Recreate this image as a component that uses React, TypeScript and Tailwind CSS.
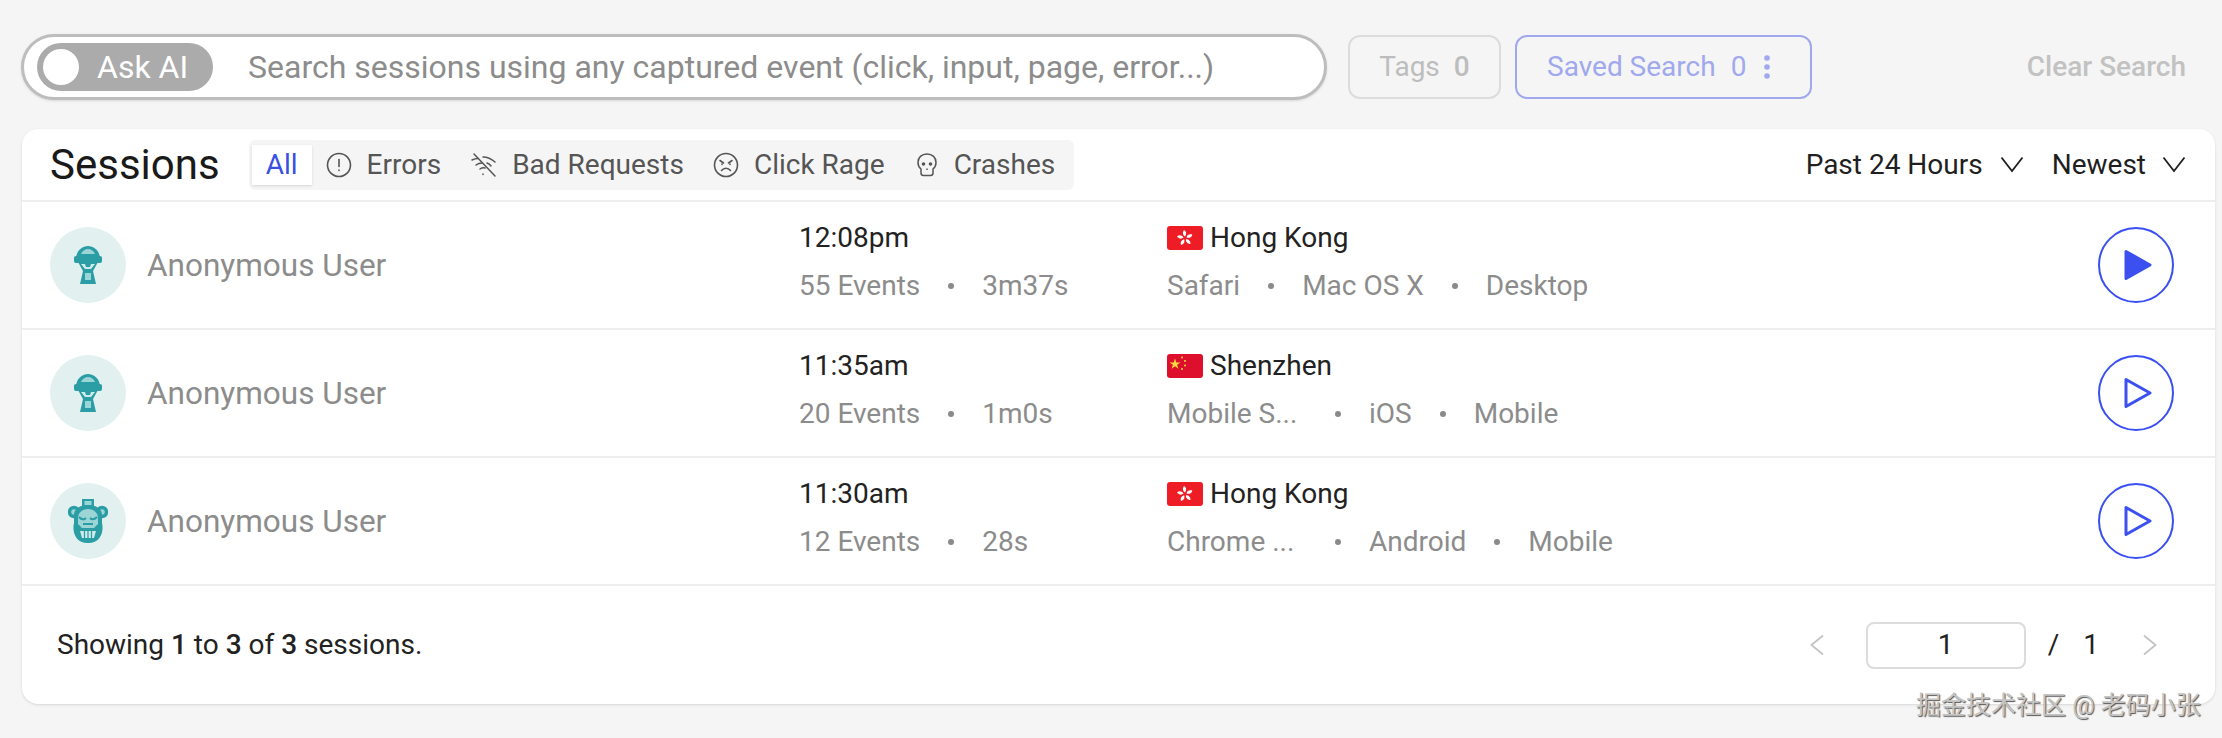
import React from 'react';

const FONT = { fontFamily: 'Roboto, "Noto Sans CJK SC", sans-serif' };

function AlertIcon() {
  return (
    <svg width="26" height="26" viewBox="0 0 26 26" fill="none" stroke="#555" strokeWidth="1.6" strokeLinecap="round">
      <circle cx="13" cy="13" r="11.5" />
      <path d="M13 7.5v7" />
      <path d="M13 18v.4" />
    </svg>
  );
}

function NoWifiIcon() {
  return (
    <svg width="28" height="28" viewBox="0 0 28 28" fill="none" stroke="#555" strokeWidth="1.5" strokeLinecap="round">
      <path d="M4 3l21 22" />
      <path d="M2 9c2-1 4-1.500 6-1.500" />
      <path d="M13 6c4 0 8 1.500 12 5" />
      <path d="M6 14c2-1.500 4-2 6-2" />
      <path d="M17 12c1.500 .5 3 1.500 4 3" />
      <path d="M10 18c1.500-1 3-1.500 5-1" />
      <path d="M13 23v.4" />
    </svg>
  );
}

function AngryIcon() {
  return (
    <svg width="26" height="26" viewBox="0 0 26 26" fill="none" stroke="#555" strokeWidth="1.6" strokeLinecap="round">
      <circle cx="13" cy="13" r="11.500" />
      <path d="M7 8.500l3.500 2.500" />
      <path d="M19 8.500l-3.500 2.500" />
      <path d="M8.500 18.500c2.500-3 6.500-3 9 0" />
      <path d="M9 12v.4M17 12v.4" />
    </svg>
  );
}

function SkullIcon() {
  return (
    <svg width="22" height="28" viewBox="0 0 22 28" fill="none" stroke="#555" strokeWidth="1.500">
      <path d="M11 3c5.500 0 9 3.500 9 8.500 0 3-1 5-3 6.500v4c0 1.500-1 2.500-2.500 2.500h-7c-1.500 0-2.500-1-2.500-2.500v-4c-2-1.500-3-3.500-3-6.500C2 6.500 5.500 3 11 3z" />
      <circle cx="7.500" cy="13" r="1.800" fill="#555" stroke="none" />
      <circle cx="14.500" cy="13" r="1.800" fill="#555" stroke="none" />
      <path d="M11 17.500v1.500" />
    </svg>
  );
}

function Chevron({ className }: { className?: string }) {
  return (
    <svg width="24" height="17" viewBox="0 0 24 17" fill="none" stroke="#1f1f1f" strokeWidth="1.8" className={className}>
      <path d="M1.500 1.500L12 15 22.500 1.500" />
    </svg>
  );
}

function PageArrow({ dir, className }: { dir: 'left' | 'right'; className?: string }) {
  return (
    <svg width="14" height="22" viewBox="0 0 14 22" fill="none" stroke="#c4c4c4" strokeWidth="1.800" className={className}>
      <path d={dir === 'left' ? 'M13 1.500L1.500 11 13 20.500' : 'M1 1.500L12.500 11 1 20.500'} />
    </svg>
  );
}

function HelmetAvatar() {
  return (
    <svg width="28" height="38" viewBox="0 0 28 38">
      <path d="M2 13C2 5 8 0 14 0s12 5 12 13z" fill="#2a9da5" />
      <path d="M7 8c1-3 4-5 7-5s6 2 7 5z" fill="#9bd5d6" />
      <rect x="0" y="10" width="28" height="7" rx="2" fill="#2a9da5" />
      <path d="M4 16h20l-5 9 3 13H6l3-13z" fill="#2a9da5" />
      <path d="M7 18h4l1 3h4l1-3h4l-4 5H11z" fill="#cfeaea" />
      <rect x="11" y="27" width="6" height="7" fill="#9bd5d6" />
    </svg>
  );
}

function BearAvatar() {
  return (
    <svg width="40" height="44" viewBox="0 0 40 44">
      <rect x="14" y="0" width="12" height="8" fill="#2a9da5" />
      <rect x="16.500" y="2" width="7" height="4" fill="#9bd5d6" />
      <circle cx="6" cy="13" r="4.500" fill="#9bd5d6" stroke="#2a9da5" strokeWidth="3.500" />
      <circle cx="34" cy="13" r="4.500" fill="#9bd5d6" stroke="#2a9da5" strokeWidth="3.500" />
      <path d="M6 16c0-6 6-10 14-10s14 4 14 10v8c2 8-1 20-14 20S4 32 6 24z" fill="#2a9da5" />
      <path d="M10 19c0-5 4-9 10-9s10 4 10 9v6l-4 4H14l-4-4z" fill="#9bd5d6" />
      <path d="M11 18c3 3 5 3 7 1M29 18c-3 3-5 3-7 1" stroke="#2a9da5" strokeWidth="2" fill="none" />
      <rect x="15" y="24" width="10" height="2" fill="#2a9da5" />
      <path d="M12 32h16l-2 7H14z" fill="#cfeaea" />
      <path d="M16.500 32v7M20 32v7M23.500 32v7" stroke="#2a9da5" strokeWidth="1.200" />
    </svg>
  );
}

function HKFlag() {
  return (
    <svg width="36" height="24" viewBox="0 0 36 24" className="shrink-0">
      <rect width="36" height="24" rx="3" fill="#ee1c25" />
      {[0, 72, 144, 216, 288].map((a) => (
        <path key={a} d="M18 10.500c-2.300-1.500-2.800-3.800-1.100-6.500 2.400 1.200 3 3.800 1.100 6.500z" fill="#fff" transform={`rotate(${a} 18 12)`} />
      ))}
    </svg>
  );
}

function CNFlag() {
  return (
    <svg width="36" height="24" viewBox="0 0 36 24" className="shrink-0">
      <rect width="36" height="24" rx="3" fill="#de0f2d" />
      <path d="M8 4.500l1.300 3.900h4.100l-3.300 2.400 1.300 3.900L8 12.300l-3.400 2.400 1.300-3.900-3.300-2.400h4.100z" fill="#ffd83d" />
      <circle cx="15" cy="3.500" r="1" fill="#ffd83d" />
      <circle cx="18" cy="7" r="1" fill="#ffd83d" />
      <circle cx="18" cy="11.500" r="1" fill="#ffd83d" />
      <circle cx="15" cy="15" r="1" fill="#ffd83d" />
    </svg>
  );
}

function PlayButton({ filled }: { filled?: boolean }) {
  return (
    <button type="button" className="w-[76px] h-[76px] rounded-full border-2 border-[#3b50ee] flex items-center justify-center">
      <svg width="28" height="32" viewBox="0 0 28 32" className="ml-[3px]" fill={filled ? '#3b50ee' : 'none'} stroke="#3b50ee" strokeWidth="3" strokeLinejoin="round">
        <path d="M2 2.500L26 16 2 29.500z" />
      </svg>
    </button>
  );
}

function Dot() {
  return <span className="w-[6px] h-[6px] rounded-full bg-[#8a8a8a] shrink-0" />;
}

type Session = {
  avatar: React.ReactNode;
  time: string;
  events: string;
  duration: string;
  flag: React.ReactNode;
  city: string;
  browser: string;
  os: string;
  device: string;
  playing?: boolean;
};

const SESSIONS: Session[] = [
  { avatar: <HelmetAvatar />, time: '12:08pm', events: '55 Events', duration: '3m37s', flag: <HKFlag />, city: 'Hong Kong', browser: 'Safari', os: 'Mac OS X', device: 'Desktop', playing: true },
  { avatar: <HelmetAvatar />, time: '11:35am', events: '20 Events', duration: '1m0s', flag: <CNFlag />, city: 'Shenzhen', browser: 'Mobile S...', os: 'iOS', device: 'Mobile' },
  { avatar: <BearAvatar />, time: '11:30am', events: '12 Events', duration: '28s', flag: <HKFlag />, city: 'Hong Kong', browser: 'Chrome ...', os: 'Android', device: 'Mobile' },
];

function SessionRow({ s }: { s: Session }) {
  return (
    <div className="h-[128px] flex items-center pl-[28px] pr-[41px] border-b-2 border-[#eeeeee]">
      <div className="w-[749px] flex items-center gap-[21px] shrink-0">
        <div className="w-[76px] h-[76px] rounded-full bg-[#e2f1f0] flex items-center justify-center">{s.avatar}</div>
        <span className="text-[31.5px] mt-[1px] text-[#8c8c8c]">Anonymous User</span>
      </div>
      <div className="w-[368px] shrink-0 mb-[6px]">
        <div className="text-[28px] leading-[36px] text-[#222]">{s.time}</div>
        <div className="mt-[12px] flex items-center gap-[28px] text-[28px] leading-[36px] text-[#8c8c8c]">
          <span>{s.events}</span>
          <Dot />
          <span>{s.duration}</span>
        </div>
      </div>
      <div className="flex-1 mb-[6px]">
        <div className="flex items-center gap-[7px] text-[28px] leading-[36px] text-[#222]">
          {s.flag}
          <span>{s.city}</span>
        </div>
        <div className="mt-[12px] flex items-center gap-[28px] text-[28px] leading-[36px] text-[#8c8c8c]">
          <span className={s.browser.endsWith('...') ? 'w-[140px]' : ''}>{s.browser}</span>
          <Dot />
          <span>{s.os}</span>
          <Dot />
          <span>{s.device}</span>
        </div>
      </div>
      <PlayButton filled={s.playing} />
    </div>
  );
}

export default function App() {
  return (
    <div className="relative w-[2222px] h-[738px] bg-[#f5f5f5] overflow-hidden" style={FONT}>
      <div className="flex items-center pt-[34px] pl-[21px] pr-[36px]">
        <div className="w-[1306px] h-[66px] rounded-full bg-white border-[3px] border-[#bdbdbd] shadow-sm flex items-center pl-[13px]">
          <div className="w-[176px] h-[48px] rounded-full bg-[#ababab] flex items-center pl-[6px] gap-[18px]">
            <span className="w-[36px] h-[36px] rounded-full bg-white" />
            <span className="text-[32px] text-white">Ask AI</span>
          </div>
          <span className="ml-[35px] text-[32px] text-[#8c8c8c]">Search sessions using any captured event (click, input, page, error...)</span>
        </div>
        <div className="ml-[21px] w-[153px] h-[64px] rounded-[12px] border-2 border-[#dcdcdc] flex items-center justify-center gap-[14px] text-[28px] text-[#bdbdbd]">
          <span>Tags</span>
          <span className="font-medium">0</span>
        </div>
        <div className="ml-[14px] w-[297px] h-[64px] rounded-[12px] border-2 border-[#a0a8ee] flex items-center pl-[30px] gap-[15px] text-[28px] text-[#a0a8ee]">
          <span>Saved Search</span>
          <span>0</span>
          <svg width="8" height="26" viewBox="0 0 8 26" fill="#a0a8ee" className="ml-[2px]">
            <circle cx="4" cy="4" r="2.800" />
            <circle cx="4" cy="13" r="2.800" />
            <circle cx="4" cy="22" r="2.800" />
          </svg>
        </div>
        <span className="ml-auto text-[28px] font-medium text-[#c2c2c2]">Clear Search</span>
      </div>

      <div className="mt-[29px] ml-[22px] w-[2193px] h-[575px] bg-white rounded-[16px] shadow-sm flex flex-col">
        <div className="h-[73px] flex items-center pl-[28px] pr-[29px] border-b-2 border-[#eeeeee]">
          <span className="text-[42px] text-[#1a1a1a]">Sessions</span>
          <div className="ml-[29px] h-[50px] rounded-[6px] bg-[#f5f5f5] flex items-center text-[28px] text-[#555]">
            <span className="h-[40px] w-[60px] ml-[3px] bg-white shadow-sm flex items-center justify-center text-[#3a50e0]">All</span>
            <span className="flex items-center gap-[15px] ml-[14px]"><AlertIcon />Errors</span>
            <span className="flex items-center gap-[14px] ml-[29px]"><NoWifiIcon />Bad Requests</span>
            <span className="flex items-center gap-[15px] ml-[29px]"><AngryIcon />Click Rage</span>
            <span className="flex items-center gap-[16px] ml-[31px] mr-[19px]"><SkullIcon />Crashes</span>
          </div>
          <div className="ml-auto flex items-center text-[28px] text-[#1f1f1f]">
            <span>Past 24 Hours</span>
            <Chevron className="ml-[17px]" />
            <span className="ml-[28px]">Newest</span>
            <Chevron className="ml-[16px]" />
          </div>
        </div>
        {SESSIONS.map((s) => (
          <SessionRow key={s.time} s={s} />
        ))}
        <div className="flex-1 flex items-center pl-[35px] pr-[58px] text-[28px] text-[#222]">
          <span>
            Showing <span className="font-medium">1</span> to <span className="font-medium">3</span> of <span className="font-medium">3</span> sessions.
          </span>
          <div className="ml-auto flex items-center">
            <PageArrow dir="left" />
            <div className="ml-[42px] w-[160px] h-[47px] rounded-[8px] border-2 border-[#dcdcdc] flex items-center justify-center">1</div>
            <span className="ml-[22px]">/</span>
            <span className="ml-[24px]">1</span>
            <PageArrow dir="right" className="ml-[44px]" />
          </div>
        </div>
      </div>

      <span className="absolute left-[1916px] top-[687px] text-[25px] text-[#c4c4c4] [text-shadow:1px_1px_1px_#555]">掘金技术社区 @ 老码小张</span>
    </div>
  );
}
